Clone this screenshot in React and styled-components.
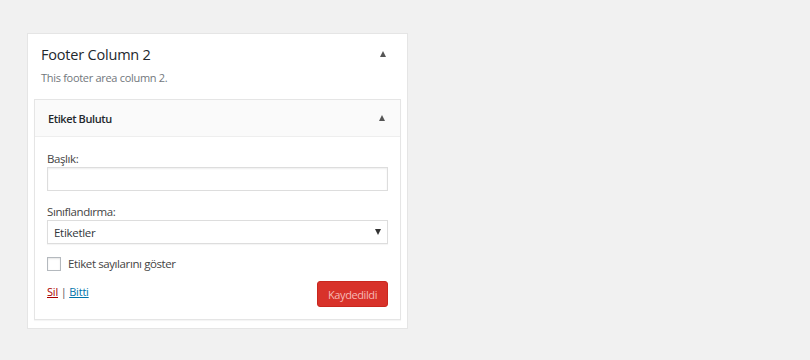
import styled, { createGlobalStyle } from "styled-components"

const GlobalStyle = createGlobalStyle`
    html, body {
        margin: 0;
        padding: 0;
        background: #f1f1f1;
    }
    body {
        font-family: "Open Sans", "Noto Sans", sans-serif;
        color: #444;
    }
`

const Page = styled.div`
    width: 810px;
    height: 360px;
    padding: 33px 0 0 27px;
    box-sizing: border-box;
`

const Sidebar = styled.div`
    width: 381px;
    background: #fff;
    border: 1px solid #e5e5e5;
    box-sizing: border-box;
    padding: 0 6px 8px 6px;
`

const SidebarHead = styled.div`
    display: flex;
    justify-content: space-between;
    align-items: center;
    padding: 5px 15px 0 7px;
    height: 30px;
`

const SidebarTitle = styled.h2`
    margin: 0;
    font-size: 14.5px;
    font-weight: 400;
    color: #23282d;
    letter-spacing: -0.2px;
`

const Arrow = styled.span`
    width: 0;
    height: 0;
    border-left: 3.5px solid transparent;
    border-right: 3.5px solid transparent;
    border-bottom: ${props => props.down ? "0" : "6px solid #555"};
    border-top: ${props => props.down ? "6px solid #333" : "0"};
`

const Desc = styled.p`
    margin: 0;
    padding: 1px 7px 0 7px;
    height: 29px;
    font-size: 11px;
    line-height: 16px;
    color: #72777c;
    letter-spacing: -0.3px;
`

const Widget = styled.div`
    border: 1px solid #e5e5e5;
    box-shadow: 0 1px 1px rgba(0, 0, 0, 0.04);
    background: #fff;
`

const WidgetHead = styled.div`
    display: flex;
    justify-content: space-between;
    align-items: center;
    height: 36px;
    padding: 0 15px 0 13px;
    background: #fafafa;
    border-bottom: 1px solid #eee;
`

const WidgetTitle = styled.h3`
    margin: 0;
    font-size: 11px;
    font-weight: 600;
    color: #23282d;
    letter-spacing: -0.4px;
`

const WidgetBody = styled.div`
    padding: 14px 12px 12px 12px;
`

const Field = styled.div`
    margin-bottom: 13px;
`

const Label = styled.label`
    display: block;
    font-size: 11.5px;
    color: #444;
    letter-spacing: -0.4px;
    line-height: 16px;
`

const TextInput = styled.input`
    display: block;
    width: 100%;
    height: 24px;
    box-sizing: border-box;
    border: 1px solid #ddd;
    box-shadow: inset 0 1px 2px rgba(0, 0, 0, 0.07);
    background: #fff;
    padding: 0 6px;
    font-family: inherit;
    font-size: 12px;
    outline: none;
`

const SelectBox = styled.div`
    display: flex;
    justify-content: space-between;
    align-items: center;
    height: 24px;
    box-sizing: border-box;
    border: 1px solid #ddd;
    box-shadow: 0 1px 1px rgba(0, 0, 0, 0.04);
    padding: 0 6px 0 6px;
    font-size: 11.5px;
    color: #32373c;
    letter-spacing: -0.3px;
`

const CheckRow = styled.div`
    display: flex;
    align-items: center;
    gap: 7px;
    margin-top: -1px;
    font-size: 11.5px;
    line-height: 16px;
    color: #444;
    letter-spacing: -0.4px;
`

const CheckBox = styled.span`
    width: 14px;
    height: 14px;
    box-sizing: border-box;
    border: 1px solid #b4b9be;
    background: #fff;
    box-shadow: inset 0 1px 2px rgba(0, 0, 0, 0.1);
`

const Actions = styled.div`
    display: flex;
    justify-content: space-between;
    align-items: flex-start;
    margin-top: 9px;
`

const Links = styled.div`
    font-size: 11px;
    line-height: 16px;
    color: #555;
    letter-spacing: -0.2px;
    padding-top: 3px;
`

const Link = styled.a`
    color: ${props => props.danger ? "#a00" : "#0073aa"};
    text-decoration: underline;
`

const SaveButton = styled.button`
    height: 26px;
    width: 71px;
    border: 1px solid #c9271e;
    border-radius: 3px;
    background: #d8322a;
    color: #f6b9b4;
    font-family: inherit;
    font-size: 11px;
    letter-spacing: -0.4px;
    padding: 0;
`

export default function App() {
    return (
        <>
            <GlobalStyle />
            <Page>
                <Sidebar>
                    <SidebarHead>
                        <SidebarTitle>Footer Column 2</SidebarTitle>
                        <Arrow />
                    </SidebarHead>
                    <Desc>This footer area column 2.</Desc>
                    <Widget>
                        <WidgetHead>
                            <WidgetTitle>Etiket Bulutu</WidgetTitle>
                            <Arrow />
                        </WidgetHead>
                        <WidgetBody>
                            <Field>
                                <Label>Başlık:</Label>
                                <TextInput type="text" />
                            </Field>
                            <Field>
                                <Label>Sınıflandırma:</Label>
                                <SelectBox>
                                    <span>Etiketler</span>
                                    <Arrow down />
                                </SelectBox>
                            </Field>
                            <CheckRow>
                                <CheckBox />
                                <span>Etiket sayılarını göster</span>
                            </CheckRow>
                            <Actions>
                                <Links>
                                    <Link danger>Sil</Link> | <Link>Bitti</Link>
                                </Links>
                                <SaveButton>Kaydedildi</SaveButton>
                            </Actions>
                        </WidgetBody>
                    </Widget>
                </Sidebar>
            </Page>
        </>
    )
}
